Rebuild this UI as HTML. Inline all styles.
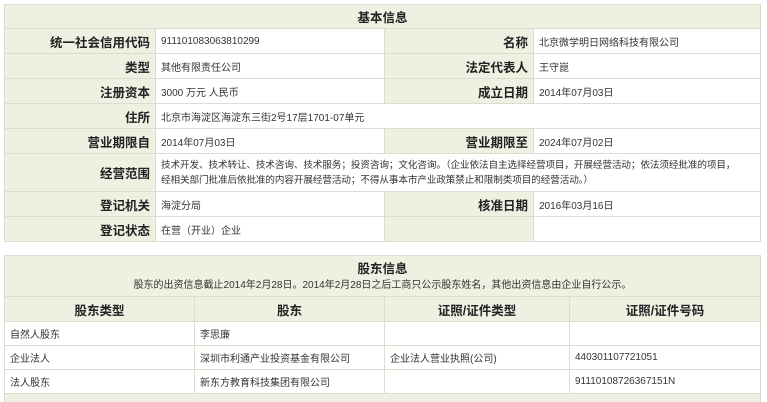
<!DOCTYPE html><html style="overflow:hidden"><head><meta charset="utf-8"><style>
html,body{margin:0;width:767px;height:402px;background:#fff;overflow:hidden}
body{font-family:"Liberation Sans","Noto Sans CJK SC",sans-serif;position:relative}
table{border-collapse:collapse;position:absolute;table-layout:fixed}
td,th{border:1px solid #dcdcd0;padding:0 5px;font-size:10px;color:#333;white-space:nowrap;overflow:hidden}
.l{background:#efefe2;text-align:right;font-weight:bold;font-size:12.5px;color:#222}
.h{background:#efefe2;text-align:center;font-weight:bold;font-size:12.5px;color:#222}
.w{white-space:normal;line-height:15px;font-size:9.6px;letter-spacing:-0.1px}
</style></head><body>
<table style="left:4px;top:4px;width:756px">
<colgroup><col style="width:151px"><col style="width:229px"><col style="width:149px"><col style="width:227px"></colgroup>
<tr style="height:24px"><td class="h" colspan="4">基本信息</td></tr>
<tr style="height:25px"><td class="l">统一社会信用代码</td><td>911101083063810299</td><td class="l">名称</td><td>北京微学明日网络科技有限公司</td></tr>
<tr style="height:25px"><td class="l">类型</td><td>其他有限责任公司</td><td class="l">法定代表人</td><td>王守崑</td></tr>
<tr style="height:25px"><td class="l">注册资本</td><td>3000 万元 人民币</td><td class="l">成立日期</td><td>2014年07月03日</td></tr>
<tr style="height:25px"><td class="l">住所</td><td colspan="3">北京市海淀区海淀东三街2号17层1701-07单元</td></tr>
<tr style="height:25px"><td class="l">营业期限自</td><td>2014年07月03日</td><td class="l">营业期限至</td><td>2024年07月02日</td></tr>
<tr style="height:38px"><td class="l">经营范围</td><td colspan="3" class="w">技术开发、技术转让、技术咨询、技术服务；投资咨询；文化咨询。（企业依法自主选择经营项目，开展经营活动；依法须经批准的项目，<br>经相关部门批准后依批准的内容开展经营活动；不得从事本市产业政策禁止和限制类项目的经营活动。）</td></tr>
<tr style="height:25px"><td class="l">登记机关</td><td>海淀分局</td><td class="l">核准日期</td><td>2016年03月16日</td></tr>
<tr style="height:25px"><td class="l">登记状态</td><td>在营（开业）企业</td><td class="l"></td><td></td></tr>
</table>
<table style="left:4px;top:255px;width:756px">
<colgroup><col style="width:190px"><col style="width:190px"><col style="width:185px"><col style="width:191px"></colgroup>
<tr style="height:41px"><td class="h" colspan="4" style="line-height:15px;padding-top:2px">股东信息<br><span style="font-weight:normal;font-size:10px;color:#333">股东的出资信息截止2014年2月28日。2014年2月28日之后工商只公示股东姓名，其他出资信息由企业自行公示。</span></td></tr>
<tr style="height:25px"><td class="h">股东类型</td><td class="h">股东</td><td class="h">证照/证件类型</td><td class="h">证照/证件号码</td></tr>
<tr style="height:24px"><td>自然人股东</td><td>李思廉</td><td></td><td></td></tr>
<tr style="height:24px"><td>企业法人</td><td>深圳市利通产业投资基金有限公司</td><td>企业法人营业执照(公司)</td><td>440301107721051</td></tr>
<tr style="height:24px"><td>法人股东</td><td>新东方教育科技集团有限公司</td><td></td><td>91110108726367151N</td></tr>
<tr style="height:24px"><td colspan="4" style="background:#efefe2"></td></tr>
</table>
</body></html>
